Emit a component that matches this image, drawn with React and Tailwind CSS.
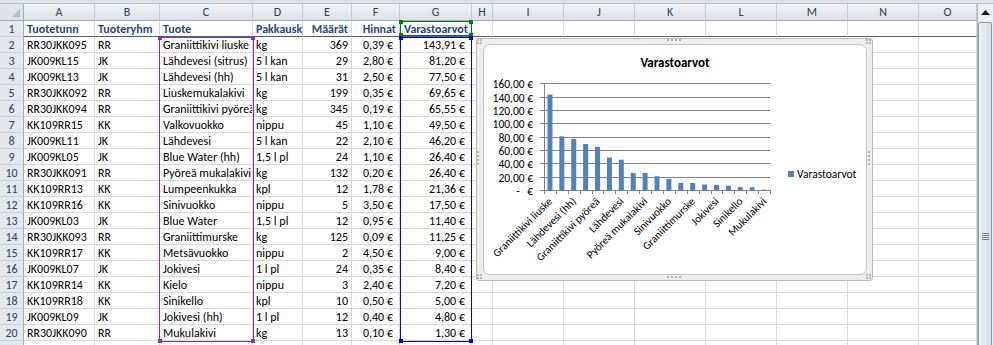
import React from "react";

// columnas A..O con su ancho en px (clases completas para que tailwind las vea)
const cols = [
  { key: "A", w: "w-[71px]" },
  { key: "B", w: "w-[65px]" },
  { key: "C", w: "w-[93px]" },
  { key: "D", w: "w-[50px]" },
  { key: "E", w: "w-[49px]" },
  { key: "F", w: "w-[48px]" },
  { key: "G", w: "w-[72px]" },
  { key: "H", w: "w-[21px]" },
  { key: "I", w: "w-[71px]" },
  { key: "J", w: "w-[71px]" },
  { key: "K", w: "w-[71px]" },
  { key: "L", w: "w-[71px]" },
  { key: "M", w: "w-[71px]" },
  { key: "N", w: "w-[71px]" },
  { key: "O", w: "w-[58px]" },
];

const headAlign = [
  "pl-[3px]",
  "pl-[3px]",
  "pl-[3px]",
  "pl-[3px]",
  "text-right pr-[3px]",
  "text-right pr-[3px]",
  "pl-[4px]",
];

const dataAlign = [
  "pl-[3px]",
  "pl-[3px]",
  "pl-[3px]",
  "pl-[3px]",
  "text-right pr-[3px]",
  "text-right pr-[6px]",
  "text-right pr-[6px]",
];

// la cabecera D se ve cortada en la hoja: "Pakkausk"
const header = ["Tuotetunn", "Tuoteryhm", "Tuote", "Pakkausk", "Määrät", "Hinnat", "Varastoarvot"];

const rows = [
  ["RR30JKK095", "RR", "Graniittikivi liuske", "kg", "369", "0,39 €", "143,91 €"],
  ["JK009KL15", "JK", "Lähdevesi (sitrus)", "5 l kan", "29", "2,80 €", "81,20 €"],
  ["JK009KL13", "JK", "Lähdevesi (hh)", "5 l kan", "31", "2,50 €", "77,50 €"],
  ["RR30JKK092", "RR", "Liuskemukalakivi", "kg", "199", "0,35 €", "69,65 €"],
  ["RR30JKK094", "RR", "Graniittikivi pyöreä", "kg", "345", "0,19 €", "65,55 €"],
  ["KK109RR15", "KK", "Valkovuokko", "nippu", "45", "1,10 €", "49,50 €"],
  ["JK009KL11", "JK", "Lähdevesi", "5 l kan", "22", "2,10 €", "46,20 €"],
  ["JK009KL05", "JK", "Blue Water (hh)", "1,5 l pl", "24", "1,10 €", "26,40 €"],
  ["RR30JKK091", "RR", "Pyöreä mukalakivi", "kg", "132", "0,20 €", "26,40 €"],
  ["KK109RR13", "KK", "Lumpeenkukka", "kpl", "12", "1,78 €", "21,36 €"],
  ["KK109RR16", "KK", "Sinivuokko", "nippu", "5", "3,50 €", "17,50 €"],
  ["JK009KL03", "JK", "Blue Water", "1,5 l pl", "12", "0,95 €", "11,40 €"],
  ["RR30JKK093", "RR", "Graniittimurske", "kg", "125", "0,09 €", "11,25 €"],
  ["KK109RR17", "KK", "Metsävuokko", "nippu", "2", "4,50 €", "9,00 €"],
  ["JK009KL07", "JK", "Jokivesi", "1 l pl", "24", "0,35 €", "8,40 €"],
  ["KK109RR14", "KK", "Kielo", "nippu", "3", "2,40 €", "7,20 €"],
  ["KK109RR18", "KK", "Sinikello", "kpl", "10", "0,50 €", "5,00 €"],
  ["JK009KL09", "JK", "Jokivesi (hh)", "1 l pl", "12", "0,40 €", "4,80 €"],
  ["RR30JKK090", "RR", "Mukulakivi", "kg", "13", "0,10 €", "1,30 €"],
];

const values = rows.map((r) => parseFloat(r[6].replace(",", ".")));

function SheetRow({ num, cells, align, bold, freeze }) {
  return (
    <div className="flex h-[16px] shrink-0">
      <div className="w-[24px] shrink-0 h-full border-r border-b border-r-[#9eabbd] border-b-[#c5ccd6] bg-[#e4e8ed] text-center text-[#27415f] leading-[16px]">
        {num}
      </div>
      {cols.map((c, i) => (
        <div
          key={c.key}
          className={`${c.w} shrink-0 h-full border-r border-b border-r-[#d8d8d8] ${
            freeze ? "border-b-[#5f5f5f]" : "border-b-[#d8d8d8]"
          } overflow-hidden whitespace-nowrap leading-[16px] ${cells && align[i] ? align[i] : ""} ${
            bold ? "font-bold text-[#1f497d]" : "text-black"
          }`}
        >
          {cells ? cells[i] : null}
        </div>
      ))}
    </div>
  );
}

function Chart() {
  const y0 = 145;
  const step = 13.333;
  const x0 = 60;
  const plotW = 226;
  const cw = plotW / 19;
  const labelIdx = [0, 2, 4, 6, 8, 10, 12, 14, 16, 18];

  return (
    <svg width="382" height="229" className="block font-['Carlito','Roboto',sans-serif]">
      <text x="191" y="22" textAnchor="middle" fontSize="13" fontWeight="700" fill="#000">
        Varastoarvot
      </text>

      {/* lineas de division y etiquetas del eje y */}
      {[0, 1, 2, 3, 4, 5, 6, 7, 8].map((i) => {
        const y = Math.round(y0 - i * step) + 0.5;
        return (
          <g key={i}>
            <line x1={x0 - 4} x2={x0 + plotW} y1={y} y2={y} stroke="#868686" strokeWidth="1" />
            {i === 0 ? (
              <>
                <text x="34" y={y + 4} textAnchor="middle" fontSize="11.5" fill="#000">
                  -
                </text>
                <text x="49" y={y + 4} textAnchor="end" fontSize="11.5" fill="#000">
                  €
                </text>
              </>
            ) : (
              <text x="49" y={y + 4} textAnchor="end" fontSize="11.5" fill="#000">
                {(i * 20).toFixed(2).replace(".", ",")} €
              </text>
            )}
          </g>
        );
      })}

      <line x1={x0 + 0.5} x2={x0 + 0.5} y1={Math.round(y0 - 8 * step)} y2={y0 + 4} stroke="#868686" />

      {/* pilares */}
      {values.map((v, i) => {
        const h = (v / 160) * (8 * step);
        const cx = x0 + (i + 0.5) * cw;
        return <rect key={i} x={cx - 2.5} y={y0 + 0.5 - h} width="5" height={h} fill="#4f81bd" />;
      })}

      {/* marcas del eje x */}
      {Array.from({ length: 20 }).map((_, k) => {
        const x = Math.round(x0 + k * cw) + 0.5;
        return <line key={k} x1={x} x2={x} y1={y0} y2={y0 + 4} stroke="#868686" />;
      })}

      {labelIdx.map((i) => {
        const ax = x0 + (i + 0.5) * cw + 3;
        const ay = 157;
        return (
          <text
            key={i}
            x={ax}
            y={ay}
            textAnchor="end"
            fontSize="11"
            fill="#000"
            transform={`rotate(-45 ${ax} ${ay})`}
          >
            {rows[i][2]}
          </text>
        );
      })}

      {/* leyenda */}
      <rect x="304" y="126" width="6" height="6" fill="#4f81bd" />
      <text x="313" y="133" fontSize="11.5" fill="#000">
        Varastoarvot
      </text>
    </svg>
  );
}

// tiradores de punticos del marco (esquinas y centros)
function FrameGrips() {
  const dot = (x, y, k) => <rect key={k} x={x} y={y} width="2" height="2" fill="#b3b3b3" />;
  const out = [];
  [[1, 1], [390, 1], [1, 236], [390, 236]].forEach(([x, y], n) => {
    out.push(dot(x, y, `c${n}a`), dot(x + 3, y, `c${n}b`), dot(x, y + 3, `c${n}c`), dot(x + 3, y + 3, `c${n}d`));
  });
  [0, 1, 2, 3].forEach((i) => {
    out.push(dot(191 + i * 4, 1, `t${i}`));
    out.push(dot(191 + i * 4, 238, `b${i}`));
    out.push(dot(1, 113 + i * 4, `l${i}`));
    out.push(dot(392, 113 + i * 4, `r${i}`));
  });
  return (
    <svg width="397" height="243" className="absolute left-[-1px] top-[-1px] pointer-events-none">
      {out}
    </svg>
  );
}

// rangos del grafico resaltados encima de la hoja
function RangeMarks() {
  const box = (x, y, w, h, color, k) => (
    <g key={k}>
      <rect x={x + 0.5} y={y + 0.5} width={w - 1} height={h - 1} fill="none" stroke={color} />
      <rect x={x - 1} y={y - 1} width="4" height="4" fill={color} />
      <rect x={x + w - 3} y={y - 1} width="4" height="4" fill={color} />
      <rect x={x - 1} y={y + h - 3} width="4" height="4" fill={color} />
      <rect x={x + w - 3} y={y + h - 3} width="4" height="4" fill={color} />
    </g>
  );
  return (
    <svg width="993" height="345" className="absolute left-0 top-0 pointer-events-none">
      {box(159, 37, 95, 305, "#8033b5", "p")}
      {box(400, 21, 72, 15, "#008000", "g")}
      {box(400, 37, 72, 305, "#0000ff", "b")}
    </svg>
  );
}

export default function App() {
  return (
    <div className="relative w-[993px] h-[345px] overflow-hidden bg-white font-['Carlito','Roboto',sans-serif] text-[12px]">
      {/* franja superior */}
      <div className="h-[4px] bg-[#dfe3e8] border-b border-[#b9c0c8]" />

      <div className="flex">
        {/* hoja */}
        <div className="w-[977px] shrink-0 flex flex-col">
          {/* cabecera de columnas */}
          <div className="flex h-[17px] shrink-0">
            <div className="w-[24px] shrink-0 h-full flex items-end justify-end pr-[3px] pb-[3px] border-r border-b border-r-[#9eabbd] border-b-[#9eabbd] bg-[#dfe3e8]">
              <svg width="8" height="8">
                <polygon points="8,0 8,8 0,8" fill="#b6bcc4" />
              </svg>
            </div>
            {cols.map((c) => (
              <div
                key={c.key}
                className={`${c.w} shrink-0 h-full border-r border-b border-r-[#c5cad1] border-b-[#9eabbd] bg-gradient-to-b from-[#f1f3f6] to-[#dde1e6] text-center text-[#27415f] leading-[16px]`}
              >
                {c.key}
              </div>
            ))}
          </div>

          <SheetRow num={1} cells={header} align={headAlign} bold freeze />
          {rows.map((r, i) => (
            <SheetRow key={i} num={i + 2} cells={r} align={dataAlign} />
          ))}
          <SheetRow num={21} />
        </div>

        {/* barra de desplazamiento */}
        <div className="w-[16px] shrink-0 h-[341px] flex flex-col bg-[#e9ecf0] border-l border-[#aab3be]">
          <div className="h-[17px] shrink-0 flex items-center justify-center bg-[#eef0f3]">
            <svg width="9" height="5">
              <polygon points="0,5 9,5 4.5,0" fill="#1b1b1b" />
            </svg>
          </div>
          <div className="mt-[1px] mr-[1px] h-[400px] shrink-0 rounded-[2px] border border-[#8d98a6] bg-gradient-to-r from-[#eef1f5] to-[#d7dde5]">
            <div className="mt-[210px] mx-auto w-[7px] flex flex-col gap-[1px]">
              <span className="block h-px bg-[#6f7886]" />
              <span className="block h-px bg-[#6f7886]" />
              <span className="block h-px bg-[#6f7886]" />
              <span className="block h-px bg-[#6f7886]" />
            </div>
          </div>
        </div>
      </div>

      <RangeMarks />

      {/* grafico incrustado encima de la hoja */}
      <div className="absolute left-[476px] top-[38px] w-[397px] h-[243px] rounded-[3px] border border-[#b9b9b9] bg-[#ededed] pl-[6px] pt-[5px]">
        <FrameGrips />
        <div className="relative w-[384px] h-[231px] rounded-[7px] border border-[#c4c4c4] bg-white overflow-hidden">
          <Chart />
        </div>
      </div>
    </div>
  );
}
